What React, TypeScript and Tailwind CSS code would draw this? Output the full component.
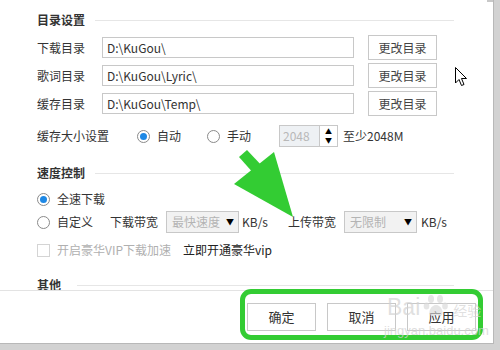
import React from "react";

const font = { fontFamily: '"Noto Sans CJK SC", "Noto Sans", sans-serif' };

function Header({ title, gap }: { title: string; gap: string }) {
  return (
    <div className="flex items-center h-[16px] pr-[39px]">
      <span className="text-[12px] font-bold text-[#333] leading-[16px]">{title}</span>
      <div className={`flex-1 h-px bg-[#e6e6e6] ${gap}`} />
    </div>
  );
}

function DirRow({ label, value, first }: { label: string; value: string; first?: boolean }) {
  return (
    <div className={`flex items-center h-[25px] ${first ? "mt-[7px]" : "mt-[3px]"}`}>
      <span className="w-[65px] text-[12px] text-[#333]">{label}</span>
      <div className="w-[252px] h-[21px] border border-[#c8c8c8] flex items-center pl-[4px] text-[12px] text-[#333]">
        {value}
      </div>
      <button className="ml-[14px] w-[69px] h-[25px] border border-[#c8c8c8] bg-white text-[12px] text-[#444]">
        更改目录
      </button>
    </div>
  );
}

function Radio({ checked }: { checked?: boolean }) {
  return (
    <span className="w-[13px] h-[13px] rounded-full border border-[#8a8a8a] bg-white flex items-center justify-center shrink-0">
      {checked && <span className="w-[7px] h-[7px] rounded-full bg-[#1e88e5]" />}
    </span>
  );
}

function Select({ value, width }: { value: string; width: string }) {
  return (
    <div className={`${width} h-[22px] border border-[#c8c8c8] bg-[#f2f2f2] flex items-center justify-between pl-[5px] pr-[4px]`}>
      <span className="text-[12px] text-[#b4b4b4]">{value}</span>
      <span className="text-[8px] text-black">▼</span>
    </div>
  );
}

export default function App() {
  return (
    <div className="w-[500px] h-[350px] bg-[#d2d2d2] relative overflow-hidden" style={font}>
      <div className="w-[494px] h-[344px] bg-white border-r border-b border-[#b8b8b8] flex flex-col">
        {/* scroll area */}
        <div className="h-[291px] border-b border-[#e3e3e3] overflow-hidden pl-[37px] pt-[12px] shrink-0">
          <Header title="目录设置" gap="ml-[10px]" />
          <DirRow label="下载目录" value="D:\KuGou\" first />
          <DirRow label="歌词目录" value="D:\KuGou\Lyric\" />
          <DirRow label="缓存目录" value="D:\KuGou\Temp\" />

          <div className="flex items-center h-[22px] mt-[9px] text-[12px] text-[#333]">
            <span className="w-[100px]">缓存大小设置</span>
            <Radio checked />
            <span className="ml-[7px] w-[50px]">自动</span>
            <Radio />
            <span className="ml-[7px] w-[52px]">手动</span>
            <div className="w-[59px] h-[22px] border border-[#c8c8c8] flex">
              <div className="flex-1 bg-[#eef1f4] text-[#b8b8b8] pl-[3px] leading-[20px]">2048</div>
              <div className="w-[18px] border-l border-[#c8c8c8] flex flex-col items-center justify-center text-[7px] leading-[9px] text-black">
                <span>▲</span>
                <span>▼</span>
              </div>
            </div>
            <span className="ml-[5px]">至少2048M</span>
          </div>

          <div className="mt-[18px]">
            <Header title="速度控制" gap="ml-[10px]" />
          </div>

          <div className="flex items-center h-[16px] mt-[10px] text-[12px] text-[#333]">
            <Radio checked />
            <span className="ml-[7px]">全速下载</span>
          </div>

          <div className="flex items-center h-[22px] mt-[4px] text-[12px] text-[#333]">
            <Radio />
            <span className="ml-[7px] w-[53px]">自定义</span>
            <span className="w-[56px]">下载带宽</span>
            <Select value="最快速度" width="w-[73px]" />
            <span className="ml-[3px] w-[46px]">KB/s</span>
            <span className="w-[56px]">上传带宽</span>
            <Select value="无限制" width="w-[73px]" />
            <span className="ml-[4px]">KB/s</span>
          </div>

          <div className="flex items-center h-[16px] mt-[9px] text-[12px]">
            <span className="w-[13px] h-[13px] border border-[#d4d4d4] bg-white shrink-0" />
            <span className="ml-[7px] w-[126px] text-[#b0b0b0]">开启豪华VIP下载加速</span>
            <span className="text-[#222]">立即开通豪华vip</span>
          </div>

          <div className="mt-[19px]">
            <Header title="其他" gap="ml-[16px]" />
          </div>
        </div>

        {/* footer */}
        <div className="flex justify-end gap-[11px] pr-[17px] pt-[12px]">
          <button className="w-[69px] h-[28px] border border-[#c8c8c8] bg-white text-[13px] text-[#333]">确定</button>
          <button className="w-[69px] h-[28px] border border-[#c8c8c8] bg-white text-[13px] text-[#333]">取消</button>
          <button className="w-[69px] h-[28px] border border-[#c8c8c8] bg-white text-[13px] text-[#333]">应用</button>
        </div>
      </div>

      {/* scrollbar remnant */}
      <div className="absolute left-[487px] top-0 w-[6px] h-[2px] bg-[#c8c8c8]" />

      {/* green highlight */}
      <div className="absolute left-[240px] top-[289px] w-[243px] h-[51px] border-[5px] border-[#33cc33] rounded-[11px]" />

      {/* green arrow */}
      <svg className="absolute left-0 top-0" width="500" height="350" viewBox="0 0 500 350">
        <polygon points="239,157 247,150 263,167 255,175" fill="#33cc33" />
        <polygon points="234,184 274,152 293,217" fill="#33cc33" />
      </svg>

      {/* mouse cursor */}
      <svg className="absolute left-[455px] top-[67px]" width="14" height="20" viewBox="0 0 14 20">
        <path d="M0.5 0.5 L0.5 16 L4 12.5 L6.5 18.5 L9 17.5 L6.5 11.5 L11.5 11.5 Z" fill="white" stroke="black" strokeWidth="1" strokeLinejoin="round" />
      </svg>

      {/* watermark */}
      <div className="absolute left-[387px] top-[294px] flex items-end text-[rgba(210,210,210,0.7)] leading-none pointer-events-none">
        <span className="text-[23px]" style={{ fontFamily: '"Liberation Sans", sans-serif' }}>Bai</span>
        <svg className="ml-[3px] mb-[1px]" width="26" height="24" viewBox="0 0 26 24">
          <g fill="rgba(215,215,215,0.65)">
            <ellipse cx="8" cy="5" rx="3" ry="4" />
            <ellipse cx="17" cy="5" rx="3" ry="4" />
            <ellipse cx="3.5" cy="12" rx="2.8" ry="3.5" />
            <ellipse cx="22" cy="12" rx="2.8" ry="3.5" />
            <path d="M13 11 C8 11 5 18 7 21 C9 23 12 21 13 21 C14 21 17 23 19 21 C21 18 18 11 13 11 Z" />
          </g>
        </svg>
        <span className="text-[14px] ml-[4px] mb-[2px]">经验</span>
      </div>
      <div
        className="absolute left-[384px] top-[321px] text-[13px] text-[rgba(210,210,210,0.75)] pointer-events-none"
        style={{ fontFamily: '"Liberation Sans", sans-serif' }}
      >
        jingyan.baidu.com
      </div>
    </div>
  );
}
